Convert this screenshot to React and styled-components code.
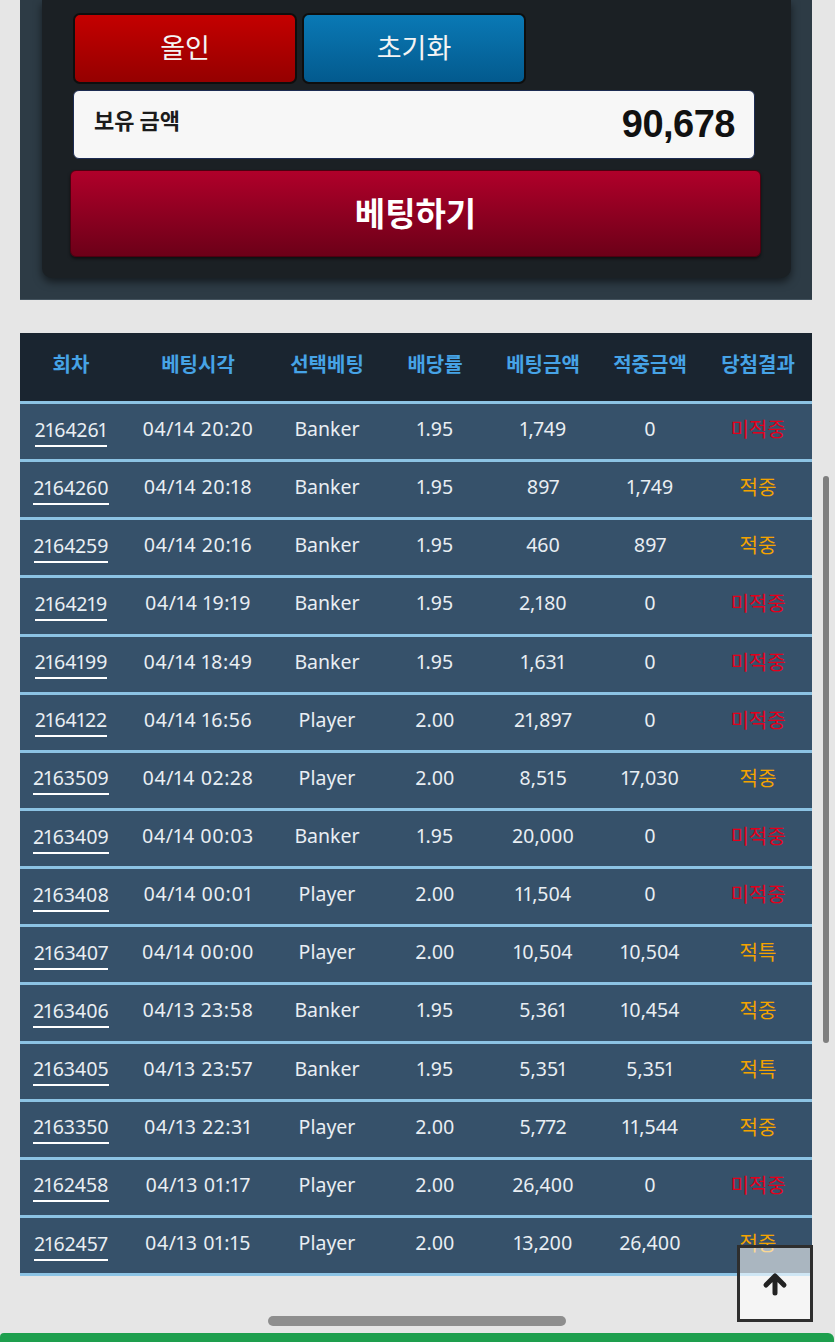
import React from 'react';
import styled, { createGlobalStyle, css } from 'styled-components';

const GlobalStyle = createGlobalStyle`
  html, body { margin: 0; padding: 0; background: #e6e6e6; }
  body { font-family: "Noto Sans CJK KR", "Noto Sans", sans-serif; }
  * { box-sizing: border-box; }
`;

const Page = styled.div`
  position: relative;
  width: 835px;
  height: 1342px;
  overflow: hidden;
  background: #e6e6e6;
  padding: 0 23px 0 20px;
`;

const Panel = styled.section`
  background: #2d3b45;
  padding: 0 21px 21px 22px;
  border-bottom: 1px solid #44535e;
`;

const Card = styled.div`
  background: #1b2024;
  border-radius: 0 0 10px 10px;
  box-shadow: 0 4px 8px rgba(0, 0, 0, 0.55);
  padding: 13px 30px 21px 28px;
  display: flex;
  flex-direction: column;
`;

const ButtonRow = styled.div`
  display: flex;
  gap: 5px;
  margin: 0 0 6px 3px;
`;

const ActionButton = styled.button`
  width: 224px;
  height: 71px;
  border: 2px solid #0e0e0e;
  border-radius: 7px;
  color: #f4f4f4;
  font-family: "Noto Sans CJK KR", "Noto Sans", sans-serif;
  font-size: 27px;
  font-weight: 400;
  padding: 0 0 4px;
  ${(p) =>
    p.$tone === 'red'
      ? css`background: linear-gradient(#c40000, #950000);`
      : css`background: linear-gradient(#0a79b5, #035a8e);`}
`;

const Balance = styled.div`
  height: 69px;
  margin: 0 6px 11px 3px;
  background: #f7f7f7;
  border: 1px solid #1c2b52;
  border-radius: 6px;
  display: flex;
  align-items: center;
  justify-content: space-between;
  padding: 0 19px 0 20px;
`;

const BalanceLabel = styled.span`
  font-size: 22px;
  font-weight: 700;
  color: #1b1b1b;
  margin-bottom: 11px;
`;

const BalanceAmount = styled.span`
  font-family: "Liberation Sans", Arial, sans-serif;
  font-size: 38px;
  font-weight: 700;
  color: #111;
  letter-spacing: -0.5px;
`;

const BetButton = styled.button`
  height: 87px;
  border: 1px solid #4d0010;
  border-radius: 6px;
  background: linear-gradient(#b0002a, #6c0018);
  color: #fff;
  font-family: "Noto Sans CJK KR", "Noto Sans", sans-serif;
  font-size: 33px;
  font-weight: 700;
  padding: 0 0 4px;
  box-shadow: 0 2px 3px rgba(0, 0, 0, 0.5);
`;

const Table = styled.div`
  margin-top: 33px;
  width: 792px;
`;

const cols = '102px 152px 106px 110px 106px 108px 108px';

const HeadRow = styled.div`
  display: grid;
  grid-template-columns: ${cols};
  height: 71px;
  background: #1a2530;
  border-bottom: 3px solid #8cc3e4;
  align-items: center;
`;

const HeadCell = styled.div`
  text-align: center;
  color: #46a3e6;
  font-size: 20px;
  font-weight: 700;
  padding-bottom: 8px;
`;

const Row = styled.div`
  display: grid;
  grid-template-columns: ${cols};
  height: 58.15px;
  background: #36516a;
  border-bottom: 3px solid #8cc3e4;
  align-items: center;
`;

const Cell = styled.div`
  text-align: center;
  color: #e9eef3;
  font-family: "Noto Sans", "Noto Sans CJK KR", sans-serif;
  font-variant-numeric: proportional-nums;
  font-size: 19.5px;
  line-height: 24px;
  padding-bottom: 5px;
  ${(p) =>
    p.$wide &&
    css`
      letter-spacing: 0.6px;
    `}
`;

const RoundLink = styled.span`
  display: inline-block;
  border-bottom: 2px solid #fff;
  padding-bottom: 3px;
  margin-top: 6px;
`;

const Result = styled(Cell)`
  font-family: "Noto Sans CJK KR", "Noto Sans", sans-serif;
  font-size: 20px;
  color: ${(p) => (p.$miss ? '#e2001c' : '#f3a300')};
`;

const Scrollbar = styled.div`
  position: absolute;
  left: 823px;
  top: 476px;
  width: 6px;
  height: 567px;
  border-radius: 3px;
  background: #7f7f7f;
`;

const TopButton = styled.button`
  position: absolute;
  left: 737px;
  top: 1245px;
  width: 76px;
  height: 77px;
  border: 3px solid #2e2e2e;
  background: rgba(255, 255, 255, 0.58);
  display: flex;
  align-items: center;
  justify-content: center;
  padding: 0;
`;

const HomeIndicator = styled.div`
  position: absolute;
  left: 268px;
  top: 1316px;
  width: 298px;
  height: 10px;
  border-radius: 5px;
  background: #8e8e8e;
`;

const GreenBar = styled.div`
  position: absolute;
  left: 0;
  top: 1333px;
  width: 834px;
  height: 9px;
  border-radius: 4px 6px 0 0;
  background: #1e9f4e;
`;

const headers = ['회차', '베팅시각', '선택베팅', '배당률', '베팅금액', '적중금액', '당첨결과'];

const rows = [
  ['2164261', '04/14 20:20', 'Banker', '1.95', '1,749', '0', '미적중'],
  ['2164260', '04/14 20:18', 'Banker', '1.95', '897', '1,749', '적중'],
  ['2164259', '04/14 20:16', 'Banker', '1.95', '460', '897', '적중'],
  ['2164219', '04/14 19:19', 'Banker', '1.95', '2,180', '0', '미적중'],
  ['2164199', '04/14 18:49', 'Banker', '1.95', '1,631', '0', '미적중'],
  ['2164122', '04/14 16:56', 'Player', '2.00', '21,897', '0', '미적중'],
  ['2163509', '04/14 02:28', 'Player', '2.00', '8,515', '17,030', '적중'],
  ['2163409', '04/14 00:03', 'Banker', '1.95', '20,000', '0', '미적중'],
  ['2163408', '04/14 00:01', 'Player', '2.00', '11,504', '0', '미적중'],
  ['2163407', '04/14 00:00', 'Player', '2.00', '10,504', '10,504', '적특'],
  ['2163406', '04/13 23:58', 'Banker', '1.95', '5,361', '10,454', '적중'],
  ['2163405', '04/13 23:57', 'Banker', '1.95', '5,351', '5,351', '적특'],
  ['2163350', '04/13 22:31', 'Player', '2.00', '5,772', '11,544', '적중'],
  ['2162458', '04/13 01:17', 'Player', '2.00', '26,400', '0', '미적중'],
  ['2162457', '04/13 01:15', 'Player', '2.00', '13,200', '26,400', '적중'],
];

const ArrowUp = () => (
  <svg width="26" height="24" viewBox="0 0 26 24" aria-hidden="true">
    <path
      d="M13 21 V5 M4 13 L13 4 L22 13"
      fill="none"
      stroke="#222"
      strokeWidth="5"
      strokeLinecap="round"
      strokeLinejoin="round"
    />
  </svg>
);

export default function App() {
  return (
    <>
      <GlobalStyle />
      <Page>
        <Panel>
          <Card>
            <ButtonRow>
              <ActionButton $tone="red">올인</ActionButton>
              <ActionButton $tone="blue">초기화</ActionButton>
            </ButtonRow>
            <Balance>
              <BalanceLabel>보유 금액</BalanceLabel>
              <BalanceAmount>90,678</BalanceAmount>
            </Balance>
            <BetButton>베팅하기</BetButton>
          </Card>
        </Panel>

        <Table>
          <HeadRow>
            {headers.map((h) => (
              <HeadCell key={h}>{h}</HeadCell>
            ))}
          </HeadRow>
          {rows.map((r) => (
            <Row key={r[0]}>
              <Cell>
                <RoundLink>{r[0]}</RoundLink>
              </Cell>
              <Cell $wide>{r[1]}</Cell>
              <Cell>{r[2]}</Cell>
              <Cell>{r[3]}</Cell>
              <Cell>{r[4]}</Cell>
              <Cell>{r[5]}</Cell>
              <Result $miss={r[6] === '미적중'}>{r[6]}</Result>
            </Row>
          ))}
        </Table>

        <Scrollbar />
        <TopButton aria-label="맨 위로">
          <ArrowUp />
        </TopButton>
        <HomeIndicator />
        <GreenBar />
      </Page>
    </>
  );
}
